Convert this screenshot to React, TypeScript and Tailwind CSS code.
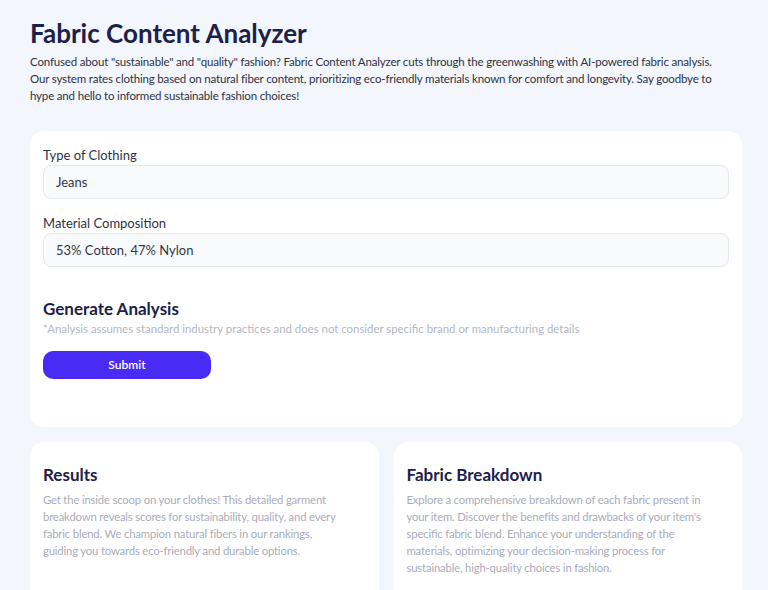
import React, { useState } from 'react';

export default function App() {
  const [clothing, setClothing] = useState('Jeans');
  const [material, setMaterial] = useState('53% Cotton, 47% Nylon');

  return (
    <div
      className="min-h-[590px] bg-[#f3f6fd] pl-[30px] pr-[26px] pt-[16px] pb-6 text-[#1d2149]"
      style={{ fontFamily: 'Lato, "Noto Sans", sans-serif' }}
    >
      <h1 className="text-[26px] font-bold leading-[34px] text-[#1d2149]">
        Fabric Content Analyzer
      </h1>
      <p className="mt-[3px] whitespace-nowrap text-[11.5px] leading-[17px] tracking-[-0.17px] text-[#2f3344]">
        Confused about "sustainable" and "quality" fashion? Fabric Content Analyzer cuts through the
        greenwashing with AI-powered fabric analysis.
        <br />
        Our system rates clothing based on natural fiber content, prioritizing eco-friendly materials
        known for comfort and longevity. Say goodbye to
        <br />
        hype and hello to informed sustainable fashion choices!
      </p>

      {/* Form card */}
      <section className="mt-[27px] rounded-[14px] bg-white px-[13px] pt-[16px] pb-[48px]">
        <label htmlFor="clothing" className="block text-[13px] leading-[17px] text-[#2f3344]">
          Type of Clothing
        </label>
        <input
          id="clothing"
          value={clothing}
          onChange={(e) => setClothing(e.target.value)}
          className="mt-[1px] block h-[34px] w-full rounded-[8px] border border-[#e6e8ee] bg-[#f9fafc] px-[12px] text-[13px] text-[#33364a] focus:outline-none"
        />

        <label htmlFor="material" className="mt-[16px] block text-[13px] leading-[17px] text-[#2f3344]">
          Material Composition
        </label>
        <input
          id="material"
          value={material}
          onChange={(e) => setMaterial(e.target.value)}
          className="mt-[1px] block h-[34px] w-full rounded-[8px] border border-[#e6e8ee] bg-[#f9fafc] px-[12px] text-[13px] text-[#33364a] focus:outline-none"
        />

        <h2 className="mt-[30px] text-[17px] font-bold leading-[24px] text-[#1d2149]">
          Generate Analysis
        </h2>
        <p className="text-[11.4px] leading-[15px] text-[#b3b7c3]">
          *Analysis assumes standard industry practices and does not consider specific brand or
          manufacturing details
        </p>
        <button
          type="button"
          className="mt-[15px] h-[28px] w-[168px] rounded-[10px] bg-[#4a2af5] text-[12px] font-semibold text-white"
        >
          Submit
        </button>
      </section>

      {/* Info cards */}
      <div className="mt-[15px] grid grid-cols-2 gap-[15px]">
        <section className="h-[170px] rounded-[14px] bg-white px-[13px] pt-[21px]">
          <h3 className="text-[17px] font-bold leading-[24px] text-[#1d2149]">Results</h3>
          <p className="mt-[4px] whitespace-nowrap text-[11.3px] leading-[17px] tracking-[-0.17px] text-[#a9adba]">
            Get the inside scoop on your clothes! This detailed garment
            <br />
            breakdown reveals scores for sustainability, quality, and every
            <br />
            fabric blend. We champion natural fibers in our rankings,
            <br />
            guiding you towards eco-friendly and durable options.
          </p>
        </section>
        <section className="h-[170px] rounded-[14px] bg-white px-[13px] pt-[21px]">
          <h3 className="text-[17px] font-bold leading-[24px] text-[#1d2149]">Fabric Breakdown</h3>
          <p className="mt-[4px] whitespace-nowrap text-[11.3px] leading-[17px] tracking-[-0.17px] text-[#a9adba]">
            Explore a comprehensive breakdown of each fabric present in
            <br />
            your item. Discover the benefits and drawbacks of your item's
            <br />
            specific fabric blend. Enhance your understanding of the
            <br />
            materials, optimizing your decision-making process for
            <br />
            sustainable, high-quality choices in fashion.
          </p>
        </section>
      </div>
    </div>
  );
}
